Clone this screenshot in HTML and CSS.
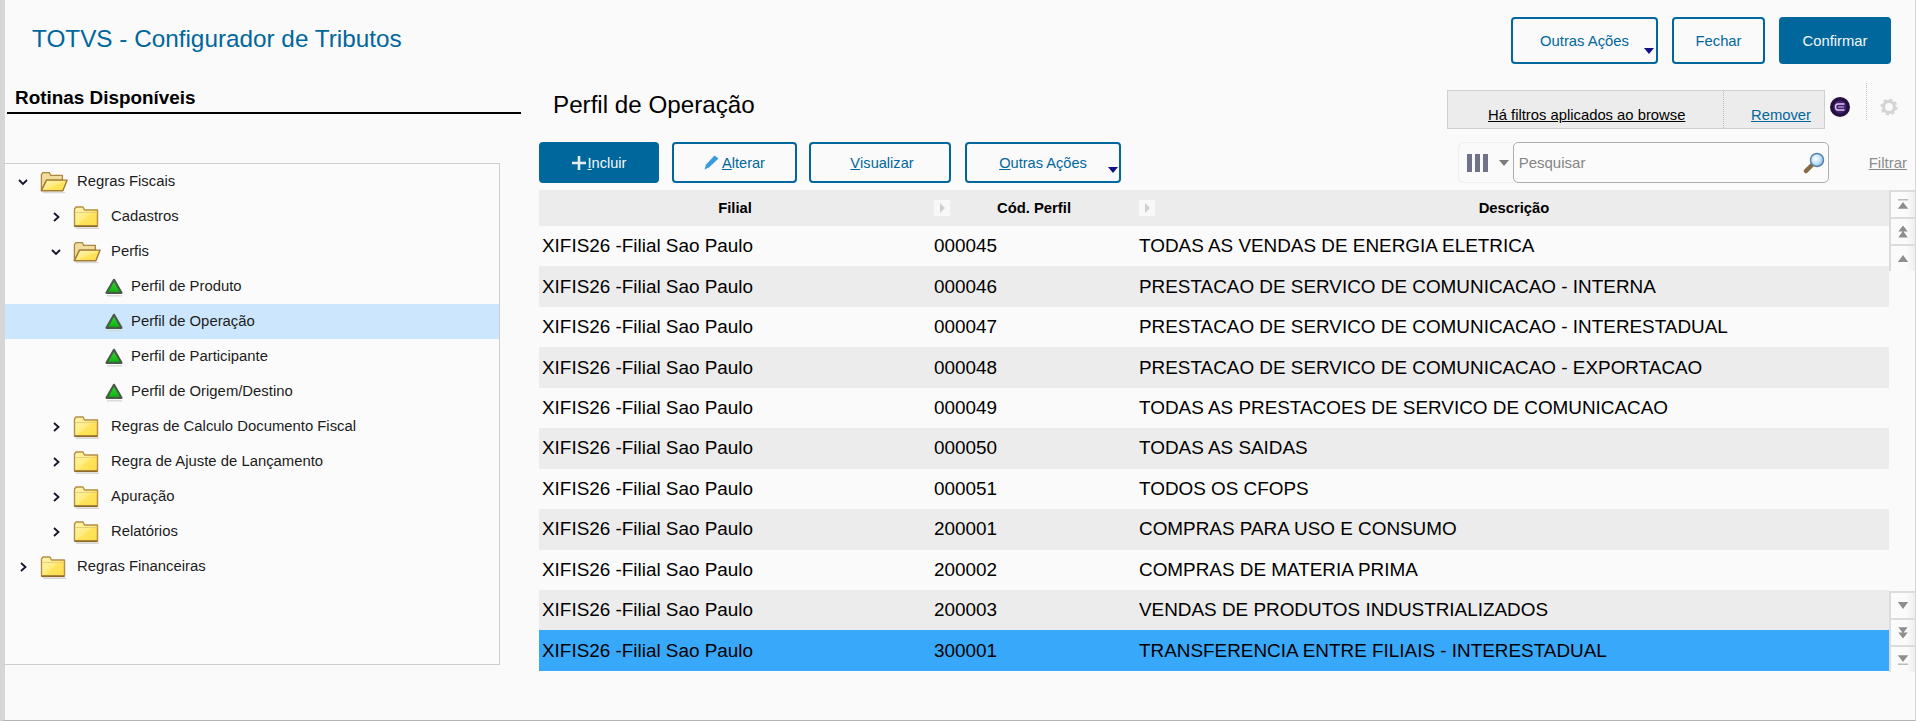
FILE: index.html
```html
<!DOCTYPE html>
<html lang="pt-BR">
<head>
  <meta charset="UTF-8" />
  <title>TOTVS - Configurador de Tributos</title>
  <link rel="stylesheet" href="styles.css">
</head>
<body>
  <!-- Icones reaproveitados -->
  <svg class="defs" width="0" height="0">
    <defs>
      <linearGradient id="gradPasta" x1="0" y1="0" x2="1" y2="1">
        <stop offset="0" stop-color="#fff6b4"/>
        <stop offset="0.5" stop-color="#ffec80"/>
        <stop offset="0.55" stop-color="#ffe45c"/>
        <stop offset="1" stop-color="#fbdc4c"/>
      </linearGradient>
      <linearGradient id="gradVerde" x1="0" y1="0" x2="0" y2="1">
        <stop offset="0" stop-color="#3ad83a"/>
        <stop offset="1" stop-color="#08b408"/>
      </linearGradient>
      <radialGradient id="gradLupa" cx="0.4" cy="0.4" r="0.7">
        <stop offset="0" stop-color="#ffffff"/>
        <stop offset="0.6" stop-color="#bcdcf6"/>
        <stop offset="1" stop-color="#5f9fd8"/>
      </radialGradient>
      <symbol id="pasta" viewBox="0 0 28 24">
        <path d="M3 23.300h23" stroke="#d8d8d8" stroke-width="1.400"/>
        <path d="M1.500 21V4L3 2H10L11.500 5H24.500V21Z" fill="url(#gradPasta)" stroke="#b58f45" stroke-width="1.400" stroke-linejoin="round"/>
        <path d="M2 7.500H24" stroke="#e8cd7a" stroke-width="1"/>
        <path d="M1.500 21.300H24.500" stroke="#8f6a28" stroke-width="1.600"/>
      </symbol>
      <symbol id="pasta-aberta" viewBox="0 0 30 24">
        <path d="M3 23.300h24" stroke="#d8d8d8" stroke-width="1.400"/>
        <path d="M1.500 21V4L3 2H10L11.500 5H24V10H7Z" fill="#f0dc9c" stroke="#ad8740" stroke-width="1.400" stroke-linejoin="round"/>
        <path d="M1.500 21.300L7 10H29L24.500 21.300Z" fill="url(#gradPasta)" stroke="#a27b34" stroke-width="1.500" stroke-linejoin="round"/>
      </symbol>
      <symbol id="triangulo" viewBox="0 0 20 20">
        <path d="M3 18.800H18" stroke="#d8d8d8" stroke-width="1.400"/>
        <path d="M10 2.800L17.500 15.800H2.500Z" fill="url(#gradVerde)" stroke="#4a5a4a" stroke-width="2.200" stroke-linejoin="round"/>
      </symbol>
      <symbol id="seta-dir" viewBox="0 0 12 12">
        <path d="M4 2L8.500 6L4 10" fill="none" stroke="#14142a" stroke-width="1.800"/>
      </symbol>
      <symbol id="seta-baixo" viewBox="0 0 12 12">
        <path d="M2 4L6 8L10 4" fill="none" stroke="#14142a" stroke-width="1.800"/>
      </symbol>
    </defs>
  </svg>

  <header class="topo">
    <h1 class="titulo">TOTVS - Configurador de Tributos</h1>
    <div class="acoes">
      <button class="btn btn-outras">Outras Ações<span class="caret"></span></button>
      <button class="btn btn-fechar">Fechar</button>
      <button class="btn primario btn-confirmar">Confirmar</button>
    </div>
  </header>

  <main class="conteudo">
    <!-- Arvore de rotinas -->
    <aside class="lateral">
      <h2 class="lateral-titulo">Rotinas Disponíveis</h2>
      <div class="arvore">
        <div class="no nivel0">
          <svg class="seta"><use href="#seta-baixo"/></svg>
          <svg class="pasta"><use href="#pasta-aberta"/></svg>
          <span>Regras Fiscais</span>
        </div>
        <div class="no nivel1">
          <svg class="seta"><use href="#seta-dir"/></svg>
          <svg class="pasta"><use href="#pasta"/></svg>
          <span>Cadastros</span>
        </div>
        <div class="no nivel1">
          <svg class="seta"><use href="#seta-baixo"/></svg>
          <svg class="pasta"><use href="#pasta-aberta"/></svg>
          <span>Perfis</span>
        </div>
        <div class="no nivel2">
          <svg class="verde"><use href="#triangulo"/></svg>
          <span>Perfil de Produto</span>
        </div>
        <div class="no nivel2 ativo">
          <svg class="verde"><use href="#triangulo"/></svg>
          <span>Perfil de Operação</span>
        </div>
        <div class="no nivel2">
          <svg class="verde"><use href="#triangulo"/></svg>
          <span>Perfil de Participante</span>
        </div>
        <div class="no nivel2">
          <svg class="verde"><use href="#triangulo"/></svg>
          <span>Perfil de Origem/Destino</span>
        </div>
        <div class="no nivel1">
          <svg class="seta"><use href="#seta-dir"/></svg>
          <svg class="pasta"><use href="#pasta"/></svg>
          <span>Regras de Calculo Documento Fiscal</span>
        </div>
        <div class="no nivel1">
          <svg class="seta"><use href="#seta-dir"/></svg>
          <svg class="pasta"><use href="#pasta"/></svg>
          <span>Regra de Ajuste de Lançamento</span>
        </div>
        <div class="no nivel1">
          <svg class="seta"><use href="#seta-dir"/></svg>
          <svg class="pasta"><use href="#pasta"/></svg>
          <span>Apuração</span>
        </div>
        <div class="no nivel1">
          <svg class="seta"><use href="#seta-dir"/></svg>
          <svg class="pasta"><use href="#pasta"/></svg>
          <span>Relatórios</span>
        </div>
        <div class="no nivel0">
          <svg class="seta"><use href="#seta-dir"/></svg>
          <svg class="pasta"><use href="#pasta"/></svg>
          <span>Regras Financeiras</span>
        </div>
      </div>
    </aside>

    <section class="painel">
      <div class="painel-topo">
        <h2 class="painel-titulo">Perfil de Operação</h2>
        <div class="filtros">
          <a class="filtros-texto" href="#">Há filtros aplicados ao browse</a>
          <a class="filtros-remover" href="#">Remover</a>
        </div>
        <svg class="logo" viewBox="0 0 20 20">
          <circle cx="10" cy="10" r="10" fill="#24103f"/>
          <circle cx="10" cy="10" r="6.500" fill="#4a1f78"/>
          <path d="M14.500 7H8Q5.500 7 5.500 10Q5.500 13 8 13H14.500" fill="none" stroke="#d6cde4" stroke-width="1.400"/>
          <path d="M8 10H14" stroke="#b8a8d0" stroke-width="1.200"/>
        </svg>
        <div class="separador"></div>
        <svg class="engrenagem" viewBox="0 0 18 18">
          <circle cx="9" cy="9" r="5.500" fill="none" stroke="#d4d4d4" stroke-width="3"/>
          <circle cx="9" cy="9" r="7.500" fill="none" stroke="#d4d4d4" stroke-width="2" stroke-dasharray="3 2.900"/>
        </svg>
      </div>

      <div class="barra">
        <button class="btn primario b-incluir">
          <svg class="ico-mais" viewBox="0 0 14 14"><path d="M7 0V14M0 7H14" stroke="#e4eef4" stroke-width="2.600"/></svg>
          <span><u>I</u>ncluir</span>
        </button>
        <button class="btn b-alterar">
          <svg class="ico-lapis" viewBox="0 0 15 15"><path d="M0.500 14.500L2 9.500L10.500 0.500L14.500 3.500L5 12.500Z" fill="#3a9be0"/></svg>
          <span><u>A</u>lterar</span>
        </button>
        <button class="btn b-visualizar"><u>V</u>isualizar</button>
        <button class="btn b-outras"><u>O</u>utras Ações<span class="caret"></span></button>
        <div class="colunas">
          <span class="barras"><i></i><i></i><i></i></span>
          <span class="colunas-seta"></span>
        </div>
        <div class="busca">
          <span class="busca-texto">Pesquisar</span>
          <svg class="lupa" viewBox="0 0 22 22">
            <path d="M9 13L3 19" stroke="#8a6a45" stroke-width="4.500" stroke-linecap="round"/>
            <circle cx="14" cy="8" r="6.500" fill="url(#gradLupa)" stroke="#5a86ad" stroke-width="1.500"/>
          </svg>
        </div>
        <a class="filtrar" href="#">Filtrar</a>
      </div>

      <div class="grade-area">
        <div class="grade">
          <div class="linha cabecalho">
            <div class="cel">Filial</div>
            <div class="cel cod"><span class="ajuste"></span>Cód. Perfil</div>
            <div class="cel"><span class="ajuste"></span>Descrição</div>
          </div>
          <div class="linha"><div class="cel">XIFIS26 -Filial Sao Paulo</div><div class="cel">000045</div><div class="cel">TODAS AS VENDAS DE ENERGIA ELETRICA</div></div>
          <div class="linha"><div class="cel">XIFIS26 -Filial Sao Paulo</div><div class="cel">000046</div><div class="cel">PRESTACAO DE SERVICO DE COMUNICACAO - INTERNA</div></div>
          <div class="linha"><div class="cel">XIFIS26 -Filial Sao Paulo</div><div class="cel">000047</div><div class="cel">PRESTACAO DE SERVICO DE COMUNICACAO - INTERESTADUAL</div></div>
          <div class="linha"><div class="cel">XIFIS26 -Filial Sao Paulo</div><div class="cel">000048</div><div class="cel">PRESTACAO DE SERVICO DE COMUNICACAO - EXPORTACAO</div></div>
          <div class="linha"><div class="cel">XIFIS26 -Filial Sao Paulo</div><div class="cel">000049</div><div class="cel">TODAS AS PRESTACOES DE SERVICO DE COMUNICACAO</div></div>
          <div class="linha"><div class="cel">XIFIS26 -Filial Sao Paulo</div><div class="cel">000050</div><div class="cel">TODAS AS SAIDAS</div></div>
          <div class="linha"><div class="cel">XIFIS26 -Filial Sao Paulo</div><div class="cel">000051</div><div class="cel">TODOS OS CFOPS</div></div>
          <div class="linha"><div class="cel">XIFIS26 -Filial Sao Paulo</div><div class="cel">200001</div><div class="cel">COMPRAS PARA USO E CONSUMO</div></div>
          <div class="linha"><div class="cel">XIFIS26 -Filial Sao Paulo</div><div class="cel">200002</div><div class="cel">COMPRAS DE MATERIA PRIMA</div></div>
          <div class="linha"><div class="cel">XIFIS26 -Filial Sao Paulo</div><div class="cel">200003</div><div class="cel">VENDAS DE PRODUTOS INDUSTRIALIZADOS</div></div>
          <div class="linha selecionada"><div class="cel">XIFIS26 -Filial Sao Paulo</div><div class="cel">300001</div><div class="cel">TRANSFERENCIA ENTRE FILIAIS - INTERESTADUAL</div></div>
        </div>

        <!-- Botoes de rolagem -->
        <div class="rolagem">
          <div class="rolagem-grupo">
            <div class="rola"><svg viewBox="0 0 14 14"><path d="M1 1.500H13" stroke="#b0b0b0" stroke-width="1.500"/><path d="M7 4L13 12H1Z" fill="#8e8e8e"/></svg></div>
            <div class="rola"><svg viewBox="0 0 14 14"><path d="M7 0L12.500 7H1.500ZM7 6L12.500 14H1.500Z" fill="#8e8e8e"/></svg></div>
            <div class="rola"><svg viewBox="0 0 14 14"><path d="M7 3L13 11H1Z" fill="#8e8e8e"/></svg></div>
          </div>
          <div class="rolagem-grupo">
            <div class="rola"><svg viewBox="0 0 14 14"><path d="M7 11L13 3H1Z" fill="#8e8e8e"/></svg></div>
            <div class="rola"><svg viewBox="0 0 14 14"><path d="M7 8L12.500 1H1.500ZM7 14L12.500 7H1.500Z" fill="#8e8e8e"/></svg></div>
            <div class="rola"><svg viewBox="0 0 14 14"><path d="M7 10L13 2H1Z" fill="#8e8e8e"/><path d="M1 12.500H13" stroke="#b0b0b0" stroke-width="1.500"/></svg></div>
          </div>
        </div>
      </div>
    </section>
  </main>
</body>
</html>
```

FILE: styles.css
```css
* {
  margin: 0;
  padding: 0;
  box-sizing: border-box;
}

html, body {
  height: 721px;
  overflow: hidden;
}

body {
  background: #fafafa;
  color: #000;
  font-family: "Liberation Sans", Arial, sans-serif;
  border-left: 5px solid #d6d6d6;
  border-right: 1px solid #d6d6d6;
  border-bottom: 1px solid #b4b4b4;
}

.defs {
  display: block;
  height: 0;
}

/* Topo */
.topo {
  display: flex;
  justify-content: space-between;
  height: 84px;
  padding: 17px 24px 0 27px;
}

.titulo {
  font-size: 24.300px;
  font-weight: 400;
  line-height: 44px;
  color: #00679c;
}

.acoes {
  display: flex;
  gap: 14px;
}

.btn {
  position: relative;
  display: flex;
  align-items: center;
  justify-content: center;
  height: 47px;
  background: #fafafa;
  color: #00679c;
  border: 2px solid #00679c;
  border-radius: 4px;
  font-family: inherit;
  font-size: 14.800px;
}

.btn.primario {
  background: #00679c;
  color: #f4f8fb;
}

.btn-outras { width: 147px; }
.btn-fechar { width: 93px; }
.btn-confirmar { width: 112px; }

.caret {
  position: absolute;
  right: 2px;
  bottom: 8px;
  border-left: 5px solid transparent;
  border-right: 5px solid transparent;
  border-top: 6px solid #14108c;
}

/* Arvore */
.conteudo {
  display: flex;
}

.lateral {
  width: 534px;
  flex-shrink: 0;
}

.lateral-titulo {
  width: 514px;
  margin-left: 2px;
  padding-left: 8px;
  height: 30px;
  font-size: 18.900px;
  line-height: 28px;
  border-bottom: 2px solid #000;
}

.arvore {
  width: 495px;
  height: 502px;
  margin-top: 49px;
  background: #fbfbfb;
  border: 1px solid #cdcdcd;
  border-left: none;
}

.no {
  display: flex;
  align-items: center;
  height: 35px;
  font-size: 14.850px;
  color: #1c1c1c;
}

.no span {
  margin-top: -1px;
}

.no.nivel0 { padding-left: 12px; }
.no.nivel1 { padding-left: 45px; }
.no.nivel2 { padding-left: 99px; }

.no.ativo {
  background: #cce6fd;
}

.seta {
  width: 12px;
  height: 12px;
  margin-right: 11px;
  flex-shrink: 0;
}

.pasta {
  width: 28px;
  height: 24px;
  margin-right: 10px;
  flex-shrink: 0;
}

.nivel0 .pasta {
  margin-right: 9px;
}

.verde {
  width: 20px;
  height: 20px;
  margin-right: 7px;
  flex-shrink: 0;
}

/* Painel direito */
.painel {
  flex: 1;
  min-width: 0;
}

.painel-topo {
  display: flex;
  align-items: flex-start;
  height: 58px;
}

.painel-titulo {
  margin: 8px 0 0 14px;
  font-size: 24.200px;
  font-weight: 400;
  line-height: 26px;
}

.filtros {
  display: flex;
  width: 378px;
  height: 39px;
  margin: 6px 0 0 auto;
  background: #ececec;
  border: 1px solid #cfcfcf;
  font-size: 14.800px;
}

.filtros-texto {
  width: 276px;
  height: 37px;
  padding: 14px 0 0 40px;
  color: #000;
  border-right: 1px dotted #bbb;
  line-height: 21px;
}

.filtros-remover {
  margin: 14px 0 0 27px;
  height: 21px;
  line-height: 21px;
  color: #00679c;
}

.logo {
  width: 20px;
  height: 20px;
  margin: 13px 0 0 5px;
}

.separador {
  width: 1px;
  height: 37px;
  margin: -1px 0 0 16px;
  border-left: 1px dotted #c4c4c4;
}

.engrenagem {
  width: 18px;
  height: 18px;
  margin: 14px 17px 0 13px;
}

/* Barra de acoes */
.barra {
  display: flex;
  align-items: center;
  height: 41px;
}

.barra .btn {
  height: 41px;
  font-size: 14.600px;
}

.b-incluir { width: 120px; margin-right: 13px; }
.b-alterar { width: 125px; margin-right: 12px; }
.b-visualizar { width: 142px; margin-right: 14px; padding-left: 4px; }
.b-outras { width: 156px; }

.barra .b-outras .caret {
  right: 1px;
  bottom: 8px;
}

.ico-mais {
  width: 14px;
  height: 14px;
  margin-right: 2px;
}

.ico-lapis {
  width: 15px;
  height: 15px;
  margin-right: 3px;
}

.colunas {
  display: flex;
  align-items: center;
  width: 55px;
  height: 41px;
  margin-left: auto;
  padding-left: 8px;
  border: 1px solid #eeeeee;
  border-right: none;
  border-radius: 6px 0 0 6px;
}

.barras {
  display: flex;
  gap: 3px;
}

.barras i {
  display: block;
  width: 5px;
  height: 18px;
  background: #6e7189;
}

.colunas-seta {
  margin-left: 11px;
  border-left: 5px solid transparent;
  border-right: 5px solid transparent;
  border-top: 6px solid #7a7a80;
}

.busca {
  display: flex;
  align-items: center;
  justify-content: space-between;
  width: 316px;
  height: 41px;
  padding: 0 3px 0 5px;
  background: #fbfbfb;
  border: 1px solid #adadad;
  border-radius: 5px;
}

.busca-texto {
  font-size: 15px;
  color: #858585;
}

.lupa {
  width: 22px;
  height: 22px;
}

.filtrar {
  margin: 0 8px 0 40px;
  font-size: 15px;
  color: #8c8c8c;
}

/* Grade */
.grade-area {
  display: flex;
  margin-top: 7px;
}

.grade {
  width: 1350px;
}

.linha {
  display: grid;
  grid-template-columns: 395px 205px 1fr;
  align-items: center;
  height: 40.450px;
  font-size: 18.900px;
}

.linha:nth-child(odd) {
  background: #ececec;
}

.linha .cel {
  padding-left: 3px;
  white-space: nowrap;
}

.linha .cel:nth-child(2),
.linha .cel:nth-child(3) {
  padding-left: 0;
}

.linha.selecionada {
  background: #38a9fa;
}

.linha.cabecalho {
  height: 36px;
  background: #ececec;
  font-size: 14.800px;
  font-weight: 700;
}

.cabecalho .cel {
  position: relative;
  text-align: center;
}

.cabecalho .cel:first-child {
  padding-left: 0;
  padding-right: 3px;
}

.linha .cel.cod {
  padding-right: 5px;
}

.ajuste {
  position: absolute;
  left: 0;
  top: 0;
  width: 16px;
  height: 16px;
  background: #f8f8f8;
}

.ajuste::after {
  content: "";
  position: absolute;
  left: 6px;
  top: 3px;
  border-top: 5px solid transparent;
  border-bottom: 5px solid transparent;
  border-left: 5px solid #cfcfcf;
}

/* Rolagem */
.rolagem {
  display: flex;
  flex-direction: column;
  justify-content: space-between;
  width: 26px;
  height: 482px;
}

.rola {
  display: flex;
  align-items: center;
  justify-content: center;
  height: 27px;
  background: linear-gradient(90deg, #fbfbfb 60%, #eef0f0);
  border-left: 2px solid #dcdcdc;
  border-top: 2px solid #dcdcdc;
}

.rola svg {
  width: 12px;
  height: 13px;
}
```
